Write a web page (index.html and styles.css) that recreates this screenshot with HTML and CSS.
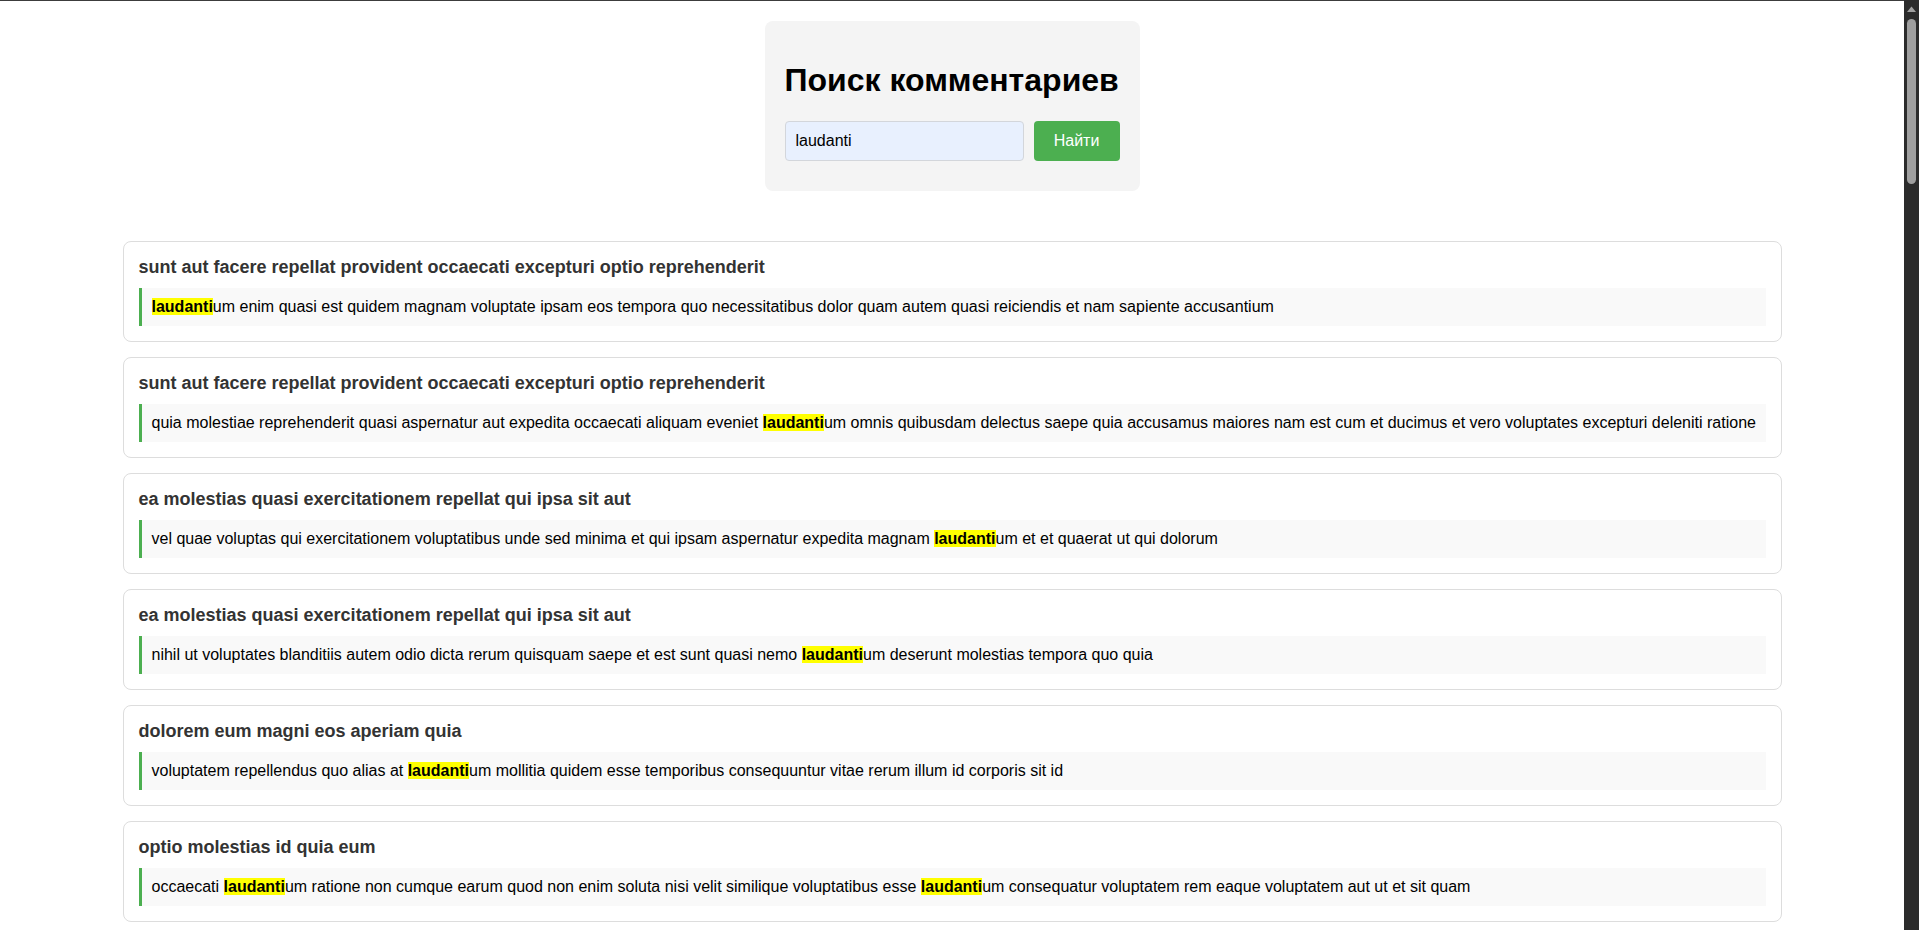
FILE: index.html
```html
<!DOCTYPE html>
<html lang="ru">
<head>
<meta charset="utf-8">
<title>Поиск комментариев</title>
<link rel="stylesheet" href="styles.css">
</head>
<body>
<div class="scrollbar" aria-hidden="true">
  <svg class="sb-arrow" width="15" height="17" viewBox="0 0 15 17"><polygon points="3,12 12,12 7.5,6.5" fill="#a0a0a0"/></svg>
  <span class="sb-thumb"></span>
</div>
<div class="search-box">
  <h1 class="search-title">Поиск комментариев</h1>
  <form class="search-form">
    <input class="search-input" type="text" value="laudanti">
    <button class="search-button" type="button">Найти</button>
  </form>
</div>
<div class="results">
  <div class="card"><h3 class="card-title">sunt aut facere repellat provident occaecati excepturi optio reprehenderit</h3><p class="comment"><mark>laudanti</mark>um enim quasi est quidem magnam voluptate ipsam eos tempora quo necessitatibus dolor quam autem quasi reiciendis et nam sapiente accusantium</p></div>
  <div class="card"><h3 class="card-title">sunt aut facere repellat provident occaecati excepturi optio reprehenderit</h3><p class="comment">quia molestiae reprehenderit quasi aspernatur aut expedita occaecati aliquam eveniet <mark>laudanti</mark>um omnis quibusdam delectus saepe quia accusamus maiores nam est cum et ducimus et vero voluptates excepturi deleniti ratione</p></div>
  <div class="card"><h3 class="card-title">ea molestias quasi exercitationem repellat qui ipsa sit aut</h3><p class="comment">vel quae voluptas qui exercitationem voluptatibus unde sed minima et qui ipsam aspernatur expedita magnam <mark>laudanti</mark>um et et quaerat ut qui dolorum</p></div>
  <div class="card"><h3 class="card-title">ea molestias quasi exercitationem repellat qui ipsa sit aut</h3><p class="comment">nihil ut voluptates blanditiis autem odio dicta rerum quisquam saepe et est sunt quasi nemo <mark>laudanti</mark>um deserunt molestias tempora quo quia</p></div>
  <div class="card"><h3 class="card-title">dolorem eum magni eos aperiam quia</h3><p class="comment">voluptatem repellendus quo alias at <mark>laudanti</mark>um mollitia quidem esse temporibus consequuntur vitae rerum illum id corporis sit id</p></div>
  <div class="card"><h3 class="card-title">optio molestias id quia eum</h3><p class="comment">occaecati <mark>laudanti</mark>um ratione non cumque earum quod non enim soluta nisi velit similique voluptatibus esse <mark>laudanti</mark>um consequatur voluptatem rem eaque voluptatem aut ut et sit quam</p></div>
  <div class="card"><h3 class="card-title">et ea vero quia laudantium autem</h3><p class="comment">ut dolorum nostrum id quia aut est fuga est inventore vel eligendi explicabo quis consectetur <mark>laudanti</mark>um aut</p></div>
  <div class="card"><h3 class="card-title">in quibusdam tempore odit est dolorem</h3><p class="comment">est et <mark>laudanti</mark>um voluptatem quia quia ut tenetur praesentium ut accusantium aut modi quas velit</p></div>
  <div class="card"><h3 class="card-title">dolorum ut in voluptas mollitia et saepe quo animi</h3><p class="comment">fugiat dolorem voluptas in rerum <mark>laudanti</mark>um eaque dolores quia vero sunt assumenda ipsum modi sit</p></div>
  <div class="card"><h3 class="card-title">voluptatem eligendi optio</h3><p class="comment">rerum sed sunt et <mark>laudanti</mark>um ea quibusdam est aut voluptatem aspernatur autem consequatur id</p></div>
  <div class="card"><h3 class="card-title">eveniet quod temporibus</h3><p class="comment">nemo <mark>laudanti</mark>um voluptates quia quo quas voluptas et ut ut asperiores odit dolorem numquam</p></div>
  <div class="card"><h3 class="card-title">sint suscipit perspiciatis velit dolorum rerum ipsa laboriosam odio</h3><p class="comment">sit molestias et <mark>laudanti</mark>um qui cumque placeat dolores eius rerum ipsam quo est ut</p></div>
  <div class="card"><h3 class="card-title">fugit voluptas sed molestias voluptatem provident</h3><p class="comment">eos ipsum <mark>laudanti</mark>um dolorem quia voluptatem quae nam quis ut perferendis mollitia et odio</p></div>
  <div class="card"><h3 class="card-title">voluptate et itaque vero tempora molestiae</h3><p class="comment">quae et est minima in iste <mark>laudanti</mark>um sed qui totam accusamus illo similique quia</p></div>
  <div class="card"><h3 class="card-title">adipisci placeat illum aut reiciendis qui</h3><p class="comment">voluptatem vel eveniet <mark>laudanti</mark>um eaque aut consequatur et totam dolores ducimus veniam</p></div>
  <div class="card"><h3 class="card-title">doloribus ad provident suscipit at</h3><p class="comment">ut quo voluptas <mark>laudanti</mark>um nesciunt sint et autem ipsum aut qui ut repudiandae</p></div>
  <div class="card"><h3 class="card-title">asperiores ea ipsam voluptatibus modi minima quia sint</h3><p class="comment">repellat aliquid praesentium <mark>laudanti</mark>um dolorem voluptatem magnam aut et fugit</p></div>
  <div class="card"><h3 class="card-title">dolor sint quo a velit explicabo quia nam</h3><p class="comment">eos qui et ipsum ipsam suscipit aut sed omnis non odio <mark>laudanti</mark>um quidem voluptatem</p></div>
  <div class="card"><h3 class="card-title">maxime id vitae nihil numquam</h3><p class="comment">veritatis unde neque eligendi quae <mark>laudanti</mark>um quod esse sed nihil dolores ullam</p></div>
  <div class="card"><h3 class="card-title">autem hic labore sunt dolores incidunt</h3><p class="comment">enim et ex nulla omnis voluptas quia qui voluptatem <mark>laudanti</mark>um consequatur</p></div>
  <div class="card"><h3 class="card-title">rem alias distinctio quo quis</h3><p class="comment">ullam consequatur ut omnis quis sit vel consequuntur ipsa <mark>laudanti</mark>um quasi eum</p></div>
  <div class="card"><h3 class="card-title">est et quae odit qui non</h3><p class="comment">similique esse doloribus nihil accusamus <mark>laudanti</mark>um omnis dolorem fuga consequuntur</p></div>
  <div class="card"><h3 class="card-title">quasi id et eos tenetur aut quo autem</h3><p class="comment">eum sed dolores ipsam sint possimus debitis <mark>laudanti</mark>um occaecati repellat</p></div>
  <div class="card"><h3 class="card-title">delectus ullam et corporis nulla voluptas sequi</h3><p class="comment">non et quaerat ex quae ad maiores maiores <mark>laudanti</mark>um recusandae totam ea</p></div>
  <div class="card"><h3 class="card-title">iusto eius quod necessitatibus culpa ea</h3><p class="comment">odit magnam ut saepe sed non qui tempora atque <mark>laudanti</mark>um nesciunt</p></div>
  <div class="card"><h3 class="card-title">a quo magni similique perferendis</h3><p class="comment">alias dolor cumque impedit blanditiis non eveniet odio maxime <mark>laudanti</mark>um</p></div>
  <div class="card"><h3 class="card-title">ullam ut quidem id aut vel consequuntur</h3><p class="comment">debitis eius sed quibusdam non quis consectetur vitae <mark>laudanti</mark>um impedit</p></div>
  <div class="card"><h3 class="card-title">doloremque illum aliquid sunt</h3><p class="comment">deserunt eos nobis asperiores et hic <mark>laudanti</mark>um est quis odit quidem</p></div>
  <div class="card"><h3 class="card-title">qui explicabo molestiae dolorem</h3><p class="comment">rerum ut et numquam <mark>laudanti</mark>um quis voluptatem modi neque omnis</p></div>
  <div class="card"><h3 class="card-title">magnam ut rerum iure</h3><p class="comment">ea velit perferendis earum ut voluptatem voluptate <mark>laudanti</mark>um itaque</p></div>
  <div class="card"><h3 class="card-title">id nihil consequatur molestias animi provident</h3><p class="comment">nisi error delectus possimus ut eligendi vitae <mark>laudanti</mark>um placeat</p></div>
  <div class="card"><h3 class="card-title">fuga nam accusamus voluptas reiciendis itaque</h3><p class="comment">ad mollitia et omnis minus architecto odit <mark>laudanti</mark>um voluptas</p></div>
  <div class="card"><h3 class="card-title">provident vel ut sit ratione est</h3><p class="comment">debitis et eaque non officia sed nesciunt <mark>laudanti</mark>um ipsam</p></div>
  <div class="card"><h3 class="card-title">explicabo et eos deleniti nostrum ab id repellendus</h3><p class="comment">animi esse sit aut sit nesciunt assumenda eum voluptas <mark>laudanti</mark>um</p></div>
  <div class="card"><h3 class="card-title">eos dolorem iste accusantium est eaque quam</h3><p class="comment">corporis rerum ducimus vel eum accusantium <mark>laudanti</mark>um maxime</p></div>
  <div class="card"><h3 class="card-title">enim quo cumque</h3><p class="comment">ut voluptatum aliquid illo tenetur nemo sequi quo facilis <mark>laudanti</mark>um</p></div>
  <div class="card"><h3 class="card-title">non est facere</h3><p class="comment">molestias id nostrum excepturi molestiae dolore omnis <mark>laudanti</mark>um repellendus</p></div>
  <div class="card"><h3 class="card-title">commodi ullam sint et excepturi error explicabo praesentium voluptas</h3><p class="comment">odio fugit voluptatum ducimus earum autem est incidunt <mark>laudanti</mark>um</p></div>
  <div class="card"><h3 class="card-title">eligendi iste nostrum consequuntur adipisci praesentium sit beatae perferendis</h3><p class="comment">similique fugit est facilis et sint <mark>laudanti</mark>um voluptatem</p></div>
  <div class="card"><h3 class="card-title">optio dolor molestias sit</h3><p class="comment">temporibus est consectetur dolore et libero debitis <mark>laudanti</mark>um vel</p></div>
  <div class="card"><h3 class="card-title">ut numquam possimus omnis eius suscipit laudantium iure</h3><p class="comment">est natus reiciendis nihil possimus aut provident <mark>laudanti</mark>um ex et</p></div>
</div>
</body>
</html>
```

FILE: styles.css
```css
html {
  background: #ffffff;
  border-top: 1px solid #3c3c3c;
}

body {
  margin: 0;
  padding: 20px 35px 20px 20px;
  background: #ffffff;
  color: #000000;
  font-family: "Liberation Sans", Arial, sans-serif;
  font-size: 16px;
}

/* browser scrollbar drawn over the right edge of the viewport */
.scrollbar {
  position: fixed;
  top: 0;
  right: 0;
  bottom: 0;
  width: 15px;
  background: #2b2b2b;
  display: flex;
  flex-direction: column;
  align-items: center;
  z-index: 10;
}

.sb-arrow {
  display: block;
  flex: none;
}

.sb-thumb {
  display: block;
  width: 9px;
  height: 165px;
  margin-top: 2px;
  background: #9f9f9f;
  border-radius: 5px;
}

.search-box {
  width: fit-content;
  margin: 0 auto 50px;
  padding: 20px;
  background: #f4f4f4;
  border-radius: 8px;
}

.search-title {
  margin: 0.67em 0;
  font-size: 32px;
  font-weight: bold;
  color: #000000;
}

.search-form {
  display: flex;
  gap: 10px;
  margin: 0 0 10px;
}

.search-input {
  box-sizing: border-box;
  width: 239px;
  height: 40px;
  padding: 0 10px;
  border: 1px solid #d3d6db;
  border-radius: 4px;
  background: #e8f0fe;
  color: #000000;
  font-family: "Liberation Sans", Arial, sans-serif;
  font-size: 16px;
  outline: none;
}

.search-button {
  box-sizing: border-box;
  width: 86px;
  height: 40px;
  padding: 0 20px;
  border: none;
  border-radius: 4px;
  background: #4caf50;
  color: #ffffff;
  font-family: "Liberation Sans", Arial, sans-serif;
  font-size: 16px;
  cursor: pointer;
}

.results {
  max-width: 1659px;
  margin: 0 auto;
}

.card {
  border: 1px solid #dddddd;
  border-radius: 8px;
  padding: 15px;
  margin-bottom: 15px;
  background: #ffffff;
}

.card-title {
  margin: 0 0 10px;
  font-size: 18px;
  font-weight: bold;
  color: #333333;
}

.comment {
  margin: 0;
  padding: 10px 2px 10px 10px;
  background: #f9f9f9;
  border-left: 3px solid #4caf50;
  color: #000000;
  white-space: nowrap;
}

mark {
  background: #ffff00;
  color: #000000;
  font-weight: bold;
}
```
